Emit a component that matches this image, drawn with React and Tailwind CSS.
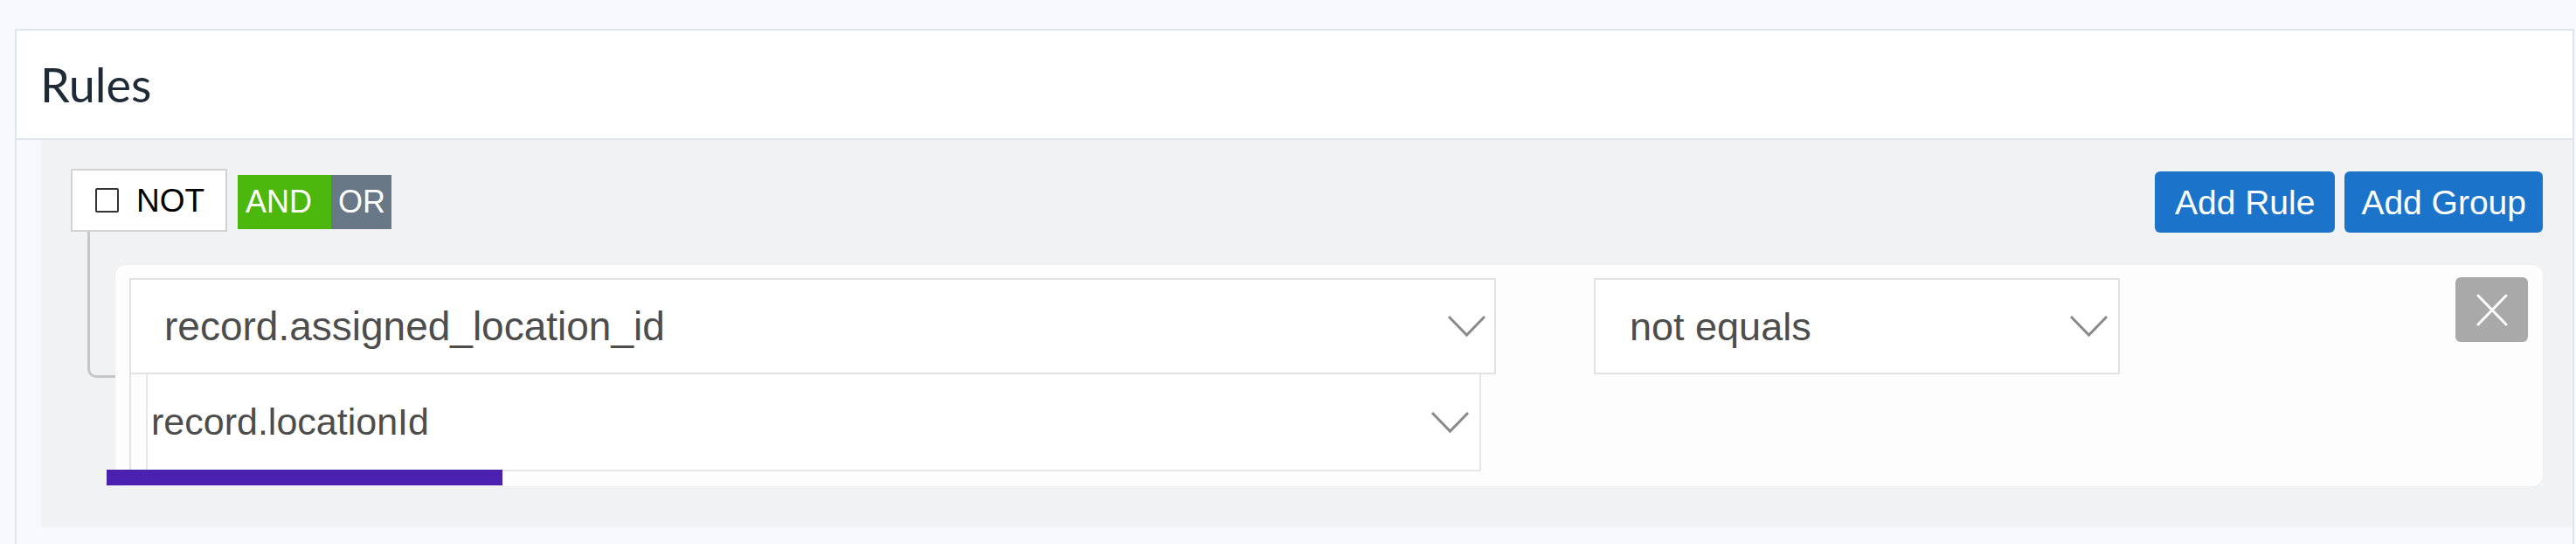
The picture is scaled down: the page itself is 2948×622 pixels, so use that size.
import React from "react";

const sans = { fontFamily: '"Liberation Sans", Arial, sans-serif' };

function Chevron() {
  return (
    <svg width="45" height="26" viewBox="0 0 45 26" className="shrink-0">
      <polyline points="2,2 22.5,23 43,2" fill="none" stroke="#8a8a8a" strokeWidth="3" />
    </svg>
  );
}

function SelectBox({ label, className, textClass, chevronPad }) {
  return (
    <div className={`flex items-center justify-between bg-white ${className}`}>
      <span className={`leading-none text-[#4d4d4d] ${textClass}`}>{label}</span>
      <span className={chevronPad}>
        <Chevron />
      </span>
    </div>
  );
}

export default function App() {
  return (
    <div className="min-h-screen bg-[#f7f9fd] pt-[33px] pl-[17px] pr-[2px]" style={sans}>
      <div className="h-[600px] border-2 border-b-0 border-[#dde5ee] bg-[#f7f9fd]">
        {/* header */}
        <div className="flex h-[125px] items-center border-b-2 border-[#dde5ee] bg-white pl-[27px]">
          <h2 className="text-[54px] leading-none text-[#1e2a37]" style={{ fontFamily: "Lato, sans-serif" }}>
            Rules
          </h2>
        </div>

        {/* query builder body */}
        <div className="relative ml-[28px] bg-[#f1f2f4] pt-[33px] pl-[34px] pr-[34px] pb-[47px]">
          <div className="flex h-[72px] items-center justify-between">
            <div className="flex items-center">
              <div className="flex h-[72px] w-[179px] items-center border-2 border-[#d3d3d3] bg-white pl-[26px]">
                <span className="h-[28px] w-[27px] rounded-[2px] border-2 border-[#333]" />
                <span className="ml-[20px] text-[37px] leading-none text-black">NOT</span>
              </div>
              <div className="ml-[12px] mt-[4px] flex h-[62px] text-[36px] leading-none text-white">
                <span className="flex w-[107px] items-center bg-[#4cb70c] pl-[9px]">AND</span>
                <span className="flex w-[69px] items-center bg-[#687886] pl-[8px]">OR</span>
              </div>
            </div>
            <div className="mt-[4px] flex gap-[11px]">
              <button className="h-[70px] rounded-[6px] bg-[#1b74c9] px-[23px] text-[39px] leading-none text-white">
                Add Rule
              </button>
              <button className="h-[70px] rounded-[6px] bg-[#1b74c9] px-[19px] text-[39px] leading-none text-white">
                Add Group
              </button>
            </div>
          </div>

          {/* tree connector */}
          <div className="absolute left-[53px] top-[105px] h-[167px] w-[32px] rounded-bl-[10px] border-b-[3px] border-l-[3px] border-[#c6c6c6]" />

          {/* rule */}
          <div className="relative ml-[51px] mt-[38px] flex items-start rounded-[12px] bg-[#fdfdfd] pt-[15px] pl-[16px] pr-[17px] pb-[17px] shadow-[0_0_2px_rgba(0,0,0,0.06)]">
            <div className="w-[1564px] border-l-2 border-[#e2e2e2]">
              <SelectBox
                label="record.assigned_location_id"
                className="h-[110px] border-y-2 border-r-2 border-[#e2e2e2] pl-[38px]"
                textClass="text-[46px]"
                chevronPad="pr-[9px]"
              />
              <SelectBox
                label="record.locationId"
                className="mx-[17px] h-[111px] border-x-2 border-b-2 border-[#e6e6e6] pl-[4px]"
                textClass="text-[43px]"
                chevronPad="pr-[11px]"
              />
            </div>
            <SelectBox
              label="not equals"
              className="ml-[112px] h-[110px] w-[602px] border-2 border-[#e2e2e2] pl-[39px]"
              textClass="text-[45px]"
              chevronPad="pr-[11px]"
            />
            <button className="ml-auto -mt-[1px] flex h-[74px] w-[83px] items-center justify-center rounded-[6px] bg-[#a9a9a9]">
              <svg width="36" height="37" viewBox="0 0 36 37">
                <path d="M2 2 L34 35 M34 2 L2 35" stroke="#fff" strokeWidth="3" strokeLinecap="round" />
              </svg>
            </button>
          </div>

          {/* highlight bar */}
          <div className="absolute left-[75px] top-[377px] h-[18px] w-[453px] bg-[#4b21b2]" />
        </div>
      </div>
    </div>
  );
}
